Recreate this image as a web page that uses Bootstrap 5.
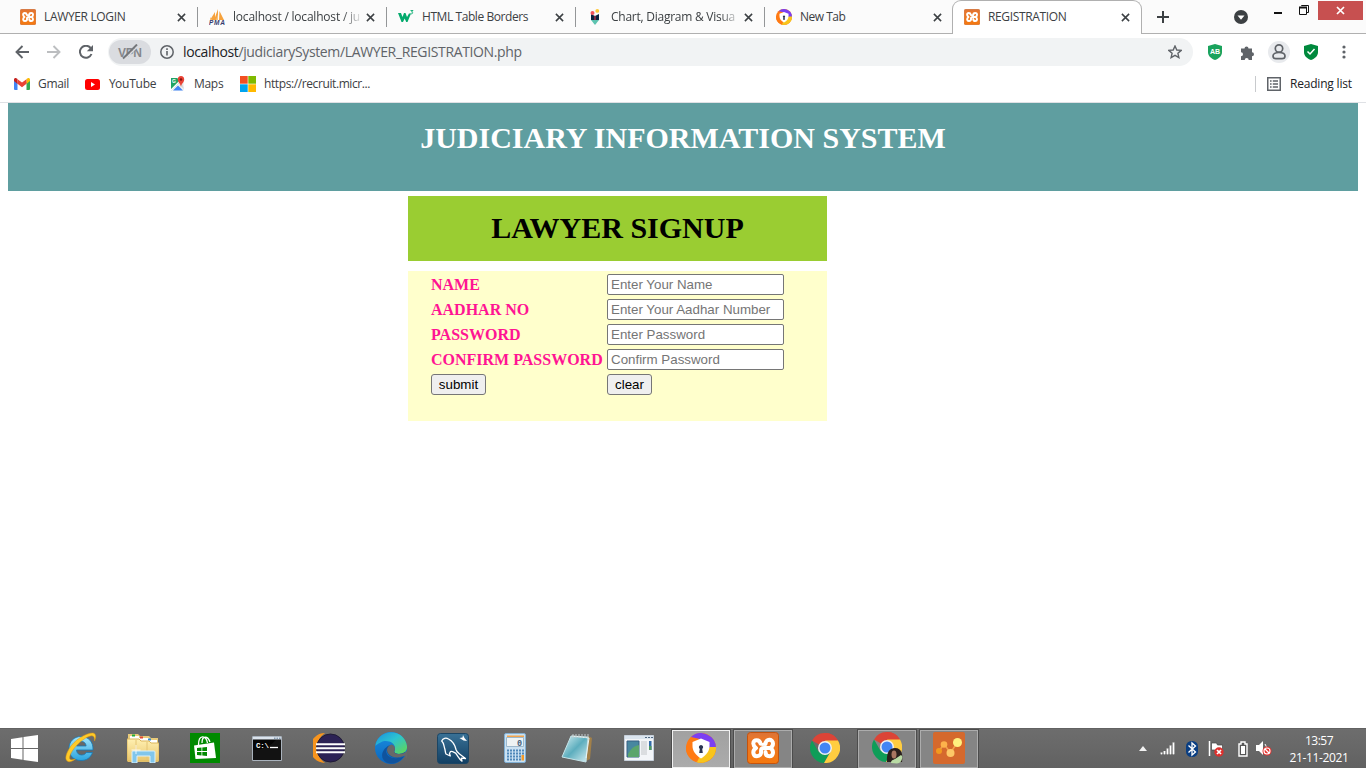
<!DOCTYPE html>
<html lang="en">
<head>
<meta charset="utf-8">
<meta name="viewport" content="width=device-width, initial-scale=1">
<title>REGISTRATION</title>
<link rel="stylesheet" href="https://cdn.jsdelivr.net/npm/bootstrap@5.3.0/dist/css/bootstrap.min.css">
<style>
body{height:768px;overflow:hidden;background:#fff;font-family:"Open Sans","Noto Sans",sans-serif;font-size:12px;line-height:16px;color:#3c4043}
svg{display:block;flex:none}
/* tab strip */
.strip{height:34px;background:#fbfbfb;padding-left:8px;box-shadow:inset 0 -1px #b0b0b0}
.btab{width:189px;height:33px;padding:0 9px 0 12px}
.btab .favi{margin-right:8px}
.ttl{width:130px;white-space:nowrap}
.fade-end{-webkit-mask-image:linear-gradient(90deg,#000 84%,transparent 100%);mask-image:linear-gradient(90deg,#000 84%,transparent 100%)}
.vline{width:1px;height:20px;background:#949698;margin-right:-1px}
.tab-on{height:34px;background:#fff;border:1px solid #b0b0b0;border-bottom:0;border-radius:9px 9px 0 0;margin-left:-1px;width:190px;padding-left:11px}
.tab-on .favi,.tab-on .ttl{margin-bottom:1px}
.winctl{height:19px;margin-bottom:14px}
.btn-x{width:45px;height:19px;background:#c75050}
/* toolbar */
.tools{height:36px}
.omni{width:1085px;height:28px;border-radius:14px;background:#f1f3f4;margin-left:15px}
.vpn{width:42px;height:24px;border-radius:12px;background:#dadce0}
.url{font-size:14px;line-height:20px;color:#5f6368;letter-spacing:-.36px;white-space:nowrap}
.url b{font-weight:400;color:#202124}
.marks{height:33px;border-bottom:1px solid #dfe1e5}
.marks span{white-space:nowrap}
/* page */
.banner{height:88px;margin:0 8px;padding-top:18px;background:#5f9ea0;color:#fff}
.big{font:bold 30px/34px "Liberation Serif",serif;margin:0}
.formcol{width:419px;margin:5px 0 0 408px}
.signhead{height:65px;background:#9acd32;color:#000;padding-top:15px}
.signform{height:150px;margin-top:10px;background:#ffc;padding:3px 0 0 23px}
.signform label{width:176px;font:bold 16px/21px "Liberation Serif",serif;color:#ff1493;white-space:nowrap}
.signform input{width:177px;height:21px;border:1px solid #767676;border-radius:2px;padding:0 3px;font:13.333px/17px "Liberation Sans",sans-serif;background:#fff}
.signform input::placeholder{color:#757575;opacity:1}
.signform button{height:21px;border:1px solid #767676;border-radius:3px;background:#efefef;color:#000;font:13.333px/17px "Liberation Sans",sans-serif;padding:0}
/* taskbar */
.taskbar{height:40px;background:linear-gradient(#6d6d6d,#686868 45%,#616161);border-top:1px solid #626262}
.app{width:62px;height:39px}
.app>svg{margin:-1px 1px 0 0}
.openbox{width:58px;height:38px;display:flex;align-items:center;justify-content:center;border:1px solid #acacac;background:#858585;box-shadow:0 0 0 1px #4c4c4c}
.openbox.now{border-color:#f0f0f0;background:linear-gradient(#a1a1a1,#ababab)}
.openbox svg{margin-top:-1px}
.clock{color:#fff;line-height:17px;width:70px;text-align:center;font-size:12px}
</style>
</head>
<body class="d-flex flex-column">
<svg width="0" height="0" class="position-absolute" aria-hidden="true">
 <defs>
  <linearGradient id="xg" x2="0" y2="1"><stop stop-color="#d8733b"/><stop offset=".15" stop-color="#e8762c"/><stop offset="1" stop-color="#f5790f"/></linearGradient>
  <linearGradient id="eg" x1="0" y1="0" x2="1" y2="1"><stop stop-color="#1b90dc"/><stop offset=".45" stop-color="#2cc3d2"/><stop offset="1" stop-color="#65d94a"/></linearGradient>
  <linearGradient id="eb" x2="0" y2="1"><stop stop-color="#1a8fe0"/><stop offset="1" stop-color="#0b65bd"/></linearGradient>
  <linearGradient id="ie" x2="0" y2="1"><stop stop-color="#a4e6fc"/><stop offset="1" stop-color="#2aa4df"/></linearGradient>
  <linearGradient id="fold" x2="0" y2="1"><stop stop-color="#fff0b2"/><stop offset="1" stop-color="#e9c66c"/></linearGradient>
  <linearGradient id="note" x2="1" y2="1"><stop stop-color="#d9f1f4"/><stop offset=".5" stop-color="#5daebe"/><stop offset="1" stop-color="#d5eef2"/></linearGradient>
  <linearGradient id="sea" x2="0" y2="1"><stop stop-color="#397196"/><stop offset="1" stop-color="#123f63"/></linearGradient>
 </defs>
 <symbol id="xampp" viewBox="0 0 32 32"><rect x=".5" y=".5" width="31" height="31" rx="3" fill="url(#xg)" stroke="#c5530c"/><path d="M13.500 11.500C12.500 7 6.300 7.300 6.300 11.500c0 2 1.200 3.300 2.700 4.500-4 2.500-3.300 8.200.8 8.200 3.200 0 4.700-2 4.200-5.200 0-2 1-3 3-3h6M18.500 12c0-5.500 7.500-5.500 7.500-.500 0 2-1 3.500-2.700 4.500 4 2.500 3.300 8.200-.8 8.200-2.700 0-4-1.700-4-4.200" fill="none" stroke="#fff" stroke-width="4" stroke-linecap="round" stroke-linejoin="round"/><path d="M13.500 11.500q1 1.500 5 .5" fill="none" stroke="#fff" stroke-width="3"/></symbol>
 <symbol id="chrome" viewBox="0 0 30 30"><path d="M15 15 2 7.500A15 15 0 0 1 28 7.500z" fill="#db4437"/><path d="M15 0A15 15 0 0 1 28 7.500H15z" fill="#db4437"/><path d="M2 7.500A15 15 0 0 0 14 30l6.500-11.500L15 15 8.500 18.700z" fill="#0f9d58"/><path d="M28 7.500A15 15 0 0 1 14 30l7.500-13L15 7.500z" fill="#ffcd40"/><circle cx="15" cy="15" r="7" fill="#f1f1f1"/><circle cx="15" cy="15" r="5.500" fill="#4285f4"/></symbol>
 <symbol id="avast" viewBox="0 0 30 30"><circle cx="15" cy="15" r="15" fill="#ff7a14"/><path d="M5 4A15 15 0 0 1 30 15l-5 3L14 6z" fill="#7b3ff2"/><path d="M30 14A15 15 0 0 1 10 29l3-7 11-8z" fill="#f8c51c"/><path d="M0 13a15 15 0 0 0 11 16l3-6-6-14z" fill="#ff7a14"/><path d="M15 5.500 23.500 9v4c0 5-3 9-8.500 12.500C9.500 22 6.500 18 6.500 13V9z" fill="#fff"/><path d="M15 12a2.200 2.200 0 0 1 1.200 4l.6 4h-3.600l.6-4A2.200 2.200 0 0 1 15 12z" fill="#2b3552"/></symbol>
 <symbol id="cross" viewBox="0 0 10 10"><path d="m1 1 8 8M9 1 1 9" stroke="#3c4043" stroke-width="1.700" fill="none"/></symbol>
</svg>

<!-- tabs -->
<header class="strip d-flex align-items-center flex-shrink-0">
 <div class="btab d-flex align-items-center"><svg class="favi" width="16" height="16"><use href="#xampp"/></svg><span class="ttl" style="letter-spacing:-.35px">LAWYER LOGIN</span><svg class="ms-auto" style="margin-right:2px" width="9" height="9"><use href="#cross"/></svg></div>
 <i class="vline"></i>
 <div class="btab d-flex align-items-center"><svg class="favi" width="16" height="16" viewBox="0 0 16 16"><path d="M1 11 6 3v8zM5 11 9 0v11zM10 11l.5-9L15 11z" fill="#f6a23c"/><path d="M1 11V8l2 3zM7 11l2-6v6z" fill="#f8c27a"/><text x="0" y="15.500" font-family="Liberation Sans" font-weight="700" font-style="italic" font-size="6.500" textLength="16" fill="#353c6e">PMA</text></svg><span class="ttl fade-end" style="letter-spacing:-.2px">localhost / localhost / ju</span><svg class="ms-auto" style="margin-right:2px" width="9" height="9"><use href="#cross"/></svg></div>
 <i class="vline"></i>
 <div class="btab d-flex align-items-center"><svg class="favi" width="16" height="16" viewBox="0 0 16 16"><path d="M0 4h3l1.500 4L6 4h1.500L9 8l2-3.500h2L9.500 13H8.200L6.700 9.500 5 13H3.500z" fill="#04aa6d"/><path d="M12.500 1.500h2.500l-1.500 1.500c2 0 1.500 2.200-.800 1.800" fill="none" stroke="#04aa6d" stroke-width=".9"/></svg><span class="ttl" style="letter-spacing:-.43px">HTML Table Borders</span><svg class="ms-auto" style="margin-right:2px" width="9" height="9"><use href="#cross"/></svg></div>
 <i class="vline"></i>
 <div class="btab d-flex align-items-center"><svg class="favi" width="16" height="16" viewBox="0 0 16 16"><path d="m4 5 4 2 4-2v6H4z" fill="#0b2340"/><path d="M4 11h8l-4 5z" fill="#5dc3b0"/><path d="M7 7h2v4H7z" fill="#7b2d45"/><circle cx="5.500" cy="4" r="2" fill="#f2545b"/><circle cx="10.300" cy="1.900" r="1.900" fill="#ffc83a"/></svg><span class="ttl fade-end" style="letter-spacing:-.25px">Chart, Diagram &amp; Visua</span><svg class="ms-auto" style="margin-right:2px" width="9" height="9"><use href="#cross"/></svg></div>
 <i class="vline"></i>
 <div class="btab d-flex align-items-center"><svg class="favi" width="16" height="16"><use href="#avast"/></svg><span class="ttl" style="letter-spacing:-.5px">New Tab</span><svg class="ms-auto" style="margin-right:2px" width="9" height="9"><use href="#cross"/></svg></div>
 <div class="btab tab-on d-flex align-items-center"><svg class="favi" width="16" height="16"><use href="#xampp"/></svg><span class="ttl" style="letter-spacing:-.35px">REGISTRATION</span><svg class="ms-auto" style="margin-right:2px" width="9" height="9"><use href="#cross"/></svg></div>
 <svg style="margin-left:15px" width="12" height="12"><path d="M6 0v12M0 6h12" stroke="#3c4043" stroke-width="2"/></svg>
 <svg style="margin-left:65px" width="14" height="14"><circle cx="7" cy="7" r="7" fill="#3c4043"/><path d="M3.500 5.500h7L7 9.800z" fill="#fff"/></svg>
 <div class="winctl d-flex align-items-center ms-auto">
  <svg width="44" height="19" viewBox="0 0 44 19"><path d="M0 12h8" stroke="#111" stroke-width="2"/><path d="M25.500 6.500h7v7h-7z" fill="none" stroke="#111"/><path d="M25 6.500h8" stroke="#111" stroke-width="2"/><path d="M27.500 5V4.500h7V11.500H33" fill="none" stroke="#111"/></svg>
  <div class="btn-x d-flex align-items-center justify-content-center"><svg width="9" height="9" viewBox="0 0 9 9"><path d="m1 1 7 7M8 1 1 8" stroke="#fff" stroke-width="1.700"/></svg></div><i style="width:3px"></i>
 </div>
</header>

<!-- toolbar -->
<nav class="tools d-flex align-items-center flex-shrink-0">
 <svg style="margin-left:15px" width="14" height="14" viewBox="0 0 14 14"><path d="M14 7H1.500M7.500 1 1.500 7l6 6" fill="none" stroke="#5f6368" stroke-width="1.900"/></svg>
 <svg style="margin-left:18px" width="14" height="14" viewBox="0 0 14 14"><path d="M0 7h12.500M6.500 1l6 6-6 6" fill="none" stroke="#bcbec0" stroke-width="1.900"/></svg>
 <svg style="margin-left:18px" width="14" height="14" viewBox="0 0 14 14"><path d="M12.500 9a6 6 0 1 1-.900-6" fill="none" stroke="#5f6368" stroke-width="2"/><path d="M14 0v6.200H7.800z" fill="#5f6368"/></svg>
 <div class="omni d-flex align-items-center">
  <div class="vpn d-flex align-items-center justify-content-center" style="margin-left:1px"><svg width="26" height="16" viewBox="0 0 26 16"><text x="1" y="12.500" font-family="Liberation Sans" font-weight="700" font-size="12" textLength="24" fill="#85878b">VPN</text><path d="M6.500 16.500 21.500 1.500" stroke="#dadce0" stroke-width="1.500"/><path d="M6 14.500 20 .5" stroke="#75777b" stroke-width="1.900"/></svg></div>
  <svg style="margin:0 9px" width="14" height="14" viewBox="0 0 14 14"><circle cx="7" cy="7" r="6.200" fill="none" stroke="#5f6368" stroke-width="1.500"/><path d="M7 6v4.500M7 3.300v1.700" stroke="#5f6368" stroke-width="1.600"/></svg>
  <span class="url"><b>localhost</b>/judiciarySystem/LAWYER_REGISTRATION.php</span>
  <svg class="ms-auto" style="margin-right:11px" width="14" height="14" viewBox="0 0 14 14"><path d="m7 1 1.800 4 4.400.400-3.300 2.900 1 4.300L7 10.300l-3.900 2.300 1-4.300L.8 5.400l4.400-.4z" fill="none" stroke="#5f6368" stroke-width="1.400"/></svg>
 </div>
 <svg style="margin-left:15px" width="14" height="16" viewBox="0 0 14 16"><path d="M7 0 14 2v6c0 4-3 6.500-7 8-4-1.500-7-4-7-8V2z" fill="#1aa35c"/><text x="2" y="9.800" font-family="Liberation Sans" font-weight="700" font-size="7" textLength="10" fill="#fff">AB</text></svg>
 <svg style="margin-left:18px" width="15" height="15" viewBox="0 0 15 15"><path d="M1 3.500h3.500a2 2 0 0 1 4 0H12v3.700a2 2 0 0 1 0 4V15H8.700a2 2 0 0 0-4 0H1v-3.700a2 2 0 0 0 0-4z" fill="#5f6368"/></svg>
 <svg style="margin-left:13px" width="22" height="22" viewBox="0 0 22 22"><circle cx="11" cy="11" r="11" fill="#e8eaed"/><circle cx="11" cy="7.500" r="3.700" fill="none" stroke="#5f6368" stroke-width="1.700"/><path d="M11 11.500c3.500 0 6 1.500 6 3.500s-1 2.700-3 2.700H8c-2 0-3-.7-3-2.700s2.500-3.500 6-3.500z" fill="none" stroke="#5f6368" stroke-width="1.700"/></svg>
 <svg style="margin-left:14px" width="14" height="16" viewBox="0 0 14 16"><path d="M7 0 14 2v6c0 4-3 6.500-7 8-4-1.500-7-4-7-8V2z" fill="#00893d"/><path d="m3.500 7.500 2.500 2.500 4.500-5" fill="none" stroke="#fff" stroke-width="1.500"/></svg>
 <svg style="margin-left:24px" width="4" height="14" viewBox="0 0 4 14"><g fill="#5f6368"><circle cx="2" cy="2" r="1.600"/><circle cx="2" cy="7" r="1.600"/><circle cx="2" cy="12" r="1.600"/></g></svg>
</nav>

<!-- bookmarks -->
<nav class="marks d-flex align-items-start flex-shrink-0">
 <div class="d-flex align-items-center w-100" style="height:28px">
 <svg style="margin-left:14px" width="16" height="12" viewBox="0 0 16 12"><path d="M0 1.500V11q0 1 1 1h2.500V4z" fill="#4285f4"/><path d="M16 1.500V11q0 1-1 1h-2.500V4z" fill="#34a853"/><path d="M0 3V1.500C0 0 1.700-.500 2.800.500L3.500 1v5z" fill="#c5221f"/><path d="M16 3V1.500C16 0 14.300-.500 13.200.500L12.500 1v5z" fill="#fbbc04"/><path d="m3.500 1.200 4.500 3.400 4.500-3.400v4.600L8 9.200 3.500 5.800z" fill="#ea4335"/></svg>
 <span style="margin-left:8px;width:47px;letter-spacing:-.3px">Gmail</span>
 <svg width="15" height="11" viewBox="0 0 15 11"><rect width="15" height="11" rx="2.500" fill="#f00"/><path d="m6 3 4 2.500L6 8z" fill="#fff"/></svg>
 <span style="margin-left:9px;width:61px;letter-spacing:-.65px"><span style="letter-spacing:-.6px">Y</span><span style="letter-spacing:-.25px">ouTube</span></span>
 <svg width="16" height="16" viewBox="0 0 16 16"><path d="M1 2h13v12.500H1z" fill="#f2f2f2"/><path d="M1 2h6l4 3L1 14.500z" fill="#1fa463"/><path d="m3 14.500 5-5 5 5z" fill="#4285f4"/><path d="m9 9 3-2 2 6z" fill="#d8d8d8"/><path d="m1 14 9-9" stroke="#fff" stroke-width="1.200"/><text x="2" y="6.500" font-size="5" font-family="Liberation Sans" font-weight="700" fill="#fff">G</text><path d="M11 11C11 8 7.800 6.500 7.800 3.500a3.200 3.500 0 0 1 6.400 0C14.200 6.500 11 8 11 11z" fill="#ea4335"/><circle cx="11" cy="3.500" r="1.200" fill="#811411"/></svg>
 <span style="margin-left:8px;width:46px;letter-spacing:-.3px">Maps</span>
 <svg width="16" height="16"><path d="M0 0h7.700v7.700H0z" fill="#f25022"/><path d="M8.300 0H16v7.700H8.300z" fill="#7fba00"/><path d="M0 8.300h7.700V16H0z" fill="#00a4ef"/><path d="M8.300 8.300H16V16H8.300z" fill="#ffb900"/></svg>
 <span style="margin-left:8px;letter-spacing:-.4px">https://recruit.micr...</span>
 <i class="ms-auto" style="width:1px;height:16px;background:#c8cacd"></i>
 <svg style="margin-left:11px" width="14" height="14" viewBox="0 0 14 14"><rect x=".75" y=".75" width="12.500" height="12.500" fill="none" stroke="#5f6368" stroke-width="1.500"/><path d="M3 4h1.600M3 7h1.600M3 10h1.600M5.800 4H11M5.800 7H11M5.800 10H11" stroke="#5f6368" stroke-width="1.400"/></svg>
 <span style="margin:0 14px 0 9px;width:62px;color:#202124;letter-spacing:-.2px">Reading list</span>
 </div>
</nav>

<!-- page content -->
<main class="flex-grow-1">
 <div class="banner text-center"><h1 class="big">JUDICIARY INFORMATION SYSTEM</h1></div>
 <div class="formcol">
  <div class="signhead text-center"><h1 class="big">LAWYER SIGNUP</h1></div>
  <form class="signform d-flex flex-column gap-1">
   <div class="d-flex"><label for="n">NAME</label><input id="n" placeholder="Enter Your Name"></div>
   <div class="d-flex"><label for="a">AADHAR NO</label><input id="a" placeholder="Enter Your Aadhar Number"></div>
   <div class="d-flex"><label for="p">PASSWORD</label><input id="p" type="password" placeholder="Enter Password"></div>
   <div class="d-flex"><label for="c">CONFIRM PASSWORD</label><input id="c" type="password" placeholder="Confirm Password"></div>
   <div class="d-flex"><button type="button" style="width:55px;margin-right:121px">submit</button><button type="reset" style="width:45px">clear</button></div>
  </form>
 </div>
</main>

<!-- taskbar -->
<footer class="taskbar d-flex align-items-center flex-shrink-0">
 <div class="d-flex justify-content-center" style="width:50px"><svg style="margin:-1px 0 0 -1px" width="27" height="27" viewBox="0 0 27 27"><path d="M0 4 11.500 2.200V13H0zM12.500 2 27 0v13H12.500zM0 14h11.500v10.700L0 23zM12.500 14H27v13l-14.500-2.100z" fill="#fff"/></svg></div>
 <div class="app d-flex align-items-center justify-content-center"><svg width="32" height="32" viewBox="0 0 32 32"><path d="M16 4.500c7 0 12.500 5 12 13.500H11.500c.3 3.500 2.500 5 5.200 5 2.300 0 3.800-1 4.500-2.500h6.300C25.500 26 21.500 28.500 16 28.500 8.500 28.500 4 23.500 4 16.500S9 4.500 16 4.500zM11.500 14h9.600c-.3-3-2-4.500-4.700-4.500-2.800 0-4.500 1.700-4.900 4.500z" fill="url(#ie)" stroke="#1779b5" stroke-width=".8"/><path d="M29.500 9c2-4 1.500-8-2-8C21 1 9 8 4 17c-3.500 6-4.500 11-1 12.500 2 .8 4.500-.3 7.500-2.500C6 28.500 3.500 28 5 23.500 8 15 20 4.500 26.500 3.800c2.600-.1 3.200 2.400 3 5.200z" fill="#ffca28" stroke="#dc9410" stroke-width=".5"/></svg></div>
 <div class="app d-flex align-items-center justify-content-center"><svg width="32" height="30" viewBox="0 0 32 30"><path d="M1 1h10l2 2h9l2 2h7v24H1z" fill="#e8cb7b"/><path d="M3 3h9v5H3zM12 5h10v5H12zM20 7h10v4H20z" fill="#fff"/><path d="M5 1.500h3v2H5z" fill="#20ad38"/><path d="M13 3.500h3v2h-3z" fill="#df4534"/><path d="M21 5.500h3v2h-3z" fill="#338bd1"/><path d="M0 6h12l2 2h8l2 2h8v18H0z" fill="url(#fold)" stroke="#dcb65a"/><path d="M9 7v20M20 9v18" stroke="#e4c474"/><path d="M5 30V19q0-1 1-1h21q1 0 1 1v11h-5v-7H10v7z" fill="#81c6eb" stroke="#d8f0fb"/><path d="M9 12v9M4.500 17h9" stroke="#fff" opacity=".8"/></svg></div>
 <div class="app d-flex align-items-center justify-content-center"><svg style="margin-right:0" width="30" height="30" viewBox="0 0 30 30"><path fill="#008a00" d="M0 0h30v30H0z"/><path d="M4 12.500 24 9.500 26 25 5.500 26z" fill="#fff"/><path d="M8.500 12c0-11 7.500-10 9-2M12 10c0-8 6-7 8-1" fill="none" stroke="#fff" stroke-width="1.300"/><path d="m7 15 4.500-.5v3.500H7zM12.300 14.400 17 14v4h-4.700zM7 19h4.500v3.500L7 22zM12.300 19H17v4l-4.700-.500z" fill="#008a00"/></svg></div>
 <div class="app d-flex align-items-center justify-content-center"><svg width="30" height="25" viewBox="0 0 30 25"><path fill="#050505" stroke="#aab3bd" d="M.5.5h29v24H.5z"/><path fill="#dce4ed" d="M1 1h28v2.500H1z"/><path d="M22 2.200h1.500m1 0H26m1 0h1.500" stroke="#5c7690"/><path d="M1 14q14 0 23-10h5v20H1z" fill="#333" opacity=".3"/><text x="4" y="11.500" fill="#fff" font-family="Liberation Mono" font-weight="700" font-size="7.500" textLength="13">C:\</text><path d="M18 11.500h8" stroke="#fff" stroke-width="1.300"/></svg></div>
 <div class="app d-flex align-items-center justify-content-center"><svg width="32" height="30" viewBox="0 0 32 30"><path d="M12 0A15 15 0 0 0 12 30 18 18 0 0 1 12 0z" fill="#f7941e"/><circle cx="17.500" cy="15" r="14" fill="#2c2255" stroke="#201b35"/><path d="M3 11.300h29M3 15.300h29M3 19.300h29" stroke="#fff" stroke-width="2"/></svg></div>
 <div class="app d-flex align-items-center justify-content-center"><svg width="32" height="32" viewBox="0 0 32 32"><circle cx="16" cy="16" r="16" fill="url(#eb)"/><path d="M.4 14C2-3 29-5 32 14c.5 5-3 8-7.500 8-4 0-6-1.500-5-3.500 3-7-7-12-14-8-3 1.500-4.500 2.500-5.100 3.500z" fill="url(#eg)"/><path d="M11.500 17c-2 8 8 12 18 7-5 7-12 9-18 6.500C4 26 7 17 14 13.500c4 0 6.500 2 5.500 5-1 2 1 3.500 4 3.500q4 0 6.500-2-.5 2-1.500 4c-8 4-17 1-17-7z" fill="#10539d"/><path d="M19.500 18.500c1-2 .5-5-3-6-3 1-4.500 3-4.500 5.500 0 3 2 5 5 6.500 4 1.500 8 1.300 12-.5 1.200-.6 2.200.2 1.500 1.200L32 27V19q-3 3-7.500 3c-4 0-6-1.500-5-3.500z" fill="#686868"/></svg></div>
 <div class="app d-flex align-items-center justify-content-center"><svg width="32" height="31" viewBox="0 0 32 31"><rect x=".5" y=".5" width="31" height="30" rx="3" fill="url(#sea)" stroke="#1b4564"/><path d="M4.700 8C6 5 9 4.500 11.500 6c5 2.500 6.500 6 7.500 10.500.5 2 2 3.500 3.500 4.500l6 4.500-4.200-.300.700 3C22 26 21 23 18.500 20c-2-1-3.500-2-5-1.500L12.500 20.500l.8 2.500L9 21C8 19 8.500 18 7.700 15.500 6.700 12.500 7 10 4.700 8z" fill="none" stroke="#fff" stroke-width="1.300" stroke-linejoin="round"/><path d="m22.500 5 3-.5L26 2l1.500 3L30 8l-3.500-.5z" fill="#fff"/></svg></div>
 <div class="app d-flex align-items-center justify-content-center"><svg width="22" height="30" viewBox="0 0 22 30"><rect x=".5" y=".5" width="21" height="29" rx="1.500" fill="#cae1f2" stroke="#80afd4"/><path d="M3 2.500h17v2H3z" fill="#f3a44c"/><path d="M2.500 4.500h17v9h-17z" fill="#eef3f4" stroke="#9db9cd"/><text x="13" y="12.500" font-family="Liberation Mono" font-weight="700" font-size="8.500" fill="#45617b">0</text><path d="M3 17.500h17M3 20.500h17M3 23.500h14M3 26.500h14" stroke="#4f88b9" stroke-width="2" stroke-dasharray="2 1"/><path d="M17.500 22h2.500v5.500h-2.500z" fill="#f59b29"/></svg></div>
 <div class="app d-flex align-items-center justify-content-center"><svg width="32" height="30" viewBox="0 0 32 30"><path d="m27 3 4 2-2 21-4 2z" fill="#a28049"/><path d="m10 3 17 1-2 25L1 24z" fill="url(#note)" stroke="#c5e3e8"/><path d="m11 3 17 2-3 20" fill="none" stroke="#e8f5f5"/><path d="M12 1v4m3-4v4m3-4v4m3-4v4m3-4v4m3-4v4" stroke="#bfc8ca"/></svg></div>
 <div class="app d-flex align-items-center justify-content-center"><svg width="30" height="26" viewBox="0 0 30 26"><path d="M.5.5h29v25H.5z" fill="#f3f5f8" stroke="#c7d0db"/><path d="M1 1h28v3H1z" fill="#dbe5ef"/><path d="M21 2.500h2m1 0h2m1 0h2" stroke="#506983"/><path d="M3 6h12v16H3z" fill="#4887a0" stroke="#375f83"/><path d="M4 19q4-8 11-9v12H4z" fill="#5ca56c"/><path d="M17 7h6m-6 2h6m-6 2h6m-6 2h6m-6 2h6m-6 2h6m-6 2h6" stroke="#c2c5c8"/><path d="M25 6h2.500v9H25z" fill="#326ba9"/><path d="M25 11h2.500v4H25z" fill="#4e9a62"/></svg></div>
 <div class="app d-flex align-items-center justify-content-center"><div class="openbox now"><svg width="30" height="30"><use href="#avast"/></svg></div></div>
 <div class="app d-flex align-items-center justify-content-center"><div class="openbox"><svg width="32" height="32"><use href="#xampp"/></svg></div></div>
 <div class="app d-flex align-items-center justify-content-center"><svg style="margin-right:0" width="30" height="30"><use href="#chrome"/></svg></div>
 <div class="app d-flex align-items-center justify-content-center"><div class="openbox"><svg width="32" height="32" viewBox="0 0 32 32"><use href="#chrome" width="30" height="30" x="1"/><path d="M16 30q-1-14 8-14c7 0 8 7 7 14z" fill="#2b201d"/><ellipse cx="23" cy="22.500" rx="2.500" ry="4" fill="#a97661"/><path d="M20 31c0-3 2-3 4-4l6-4q2 1 1 4-1 4-5 4.500z" fill="#b9dba4"/></svg></div></div>
 <div class="app d-flex align-items-center justify-content-center"><div class="openbox"><svg width="32" height="32" viewBox="0 0 32 32"><rect width="32" height="32" rx="2" fill="#d5692d"/><path d="m6 19 5-7 6.500 9 7-11" fill="none" stroke="#f3a24b" stroke-width="1.500"/><circle cx="6" cy="19" r="3" fill="#f19a20"/><circle cx="11" cy="12.500" r="3.300" fill="#fdb24b"/><circle cx="17.500" cy="21" r="4" fill="#fdc867"/><circle cx="24.500" cy="10.500" r="4.500" fill="#fff07f"/></svg></div></div>
 <div class="d-flex align-items-center ms-auto">
  <svg width="8" height="5"><path d="M0 5 4 0l4 5z" fill="#f2f2f2"/></svg>
  <svg style="margin-left:13px" width="16" height="13" viewBox="0 0 16 13"><path d="M1.500 13v-2M4.500 13v-3.500M7.500 13V7M10.500 13V4M13.500 13V1" stroke="#444" stroke-width="3"/><path d="M1.500 12.500v-2M4.500 12.500V9M7.500 12.500V6.500M10.500 12.500v-9M13.500 12.500V.5" stroke="#fff" stroke-width="2"/></svg>
  <svg style="margin-left:10px" width="12" height="16" viewBox="0 0 12 16"><rect width="12" height="16" rx="5.500" fill="#0a3e82"/><path d="m2.500 4.500 7 6.500L6 14V2l3.500 3-7 6.500" fill="none" stroke="#fff" stroke-width="1.300"/></svg>
  <svg style="margin-left:10px" width="16" height="16" viewBox="0 0 16 16"><path d="M1.500 0v15" stroke="#fff" stroke-width="1.500"/><path d="M3.500 2h5l1 2h5v7h-5L8 9H3.500z" fill="#fff" stroke="#444" stroke-width=".7"/><circle cx="11" cy="11" r="4.700" fill="#dd302d"/><path d="m9 9 4 4m0-4-4 4" stroke="#fff" stroke-width="1.700"/></svg>
  <svg style="margin-left:14px" width="10" height="16" viewBox="0 0 10 16"><path d="M3 1h4v2h2v12H1V3h2z" fill="#555" stroke="#fff" stroke-width="1.400"/><path d="M3 5h4v8H3z" fill="#fff"/></svg>
  <svg style="margin-left:8px" width="16" height="15" viewBox="0 0 16 15"><path d="M0 4h3l4-4v14l-4-4H0z" fill="#fff"/><path d="M9 3q2 2 1 6" fill="none" stroke="#fff"/><circle cx="11" cy="10" r="4.500" fill="#e8302c"/><circle cx="11" cy="10" r="3" fill="#e8302c" stroke="#fff" stroke-width="1.100"/><path d="m9 8 4 4" stroke="#fff" stroke-width="1.300"/></svg>
  <div class="clock" style="margin:0 12px"><div style="letter-spacing:-.5px">13:57</div><div style="letter-spacing:-.35px">21-11-2021</div></div>
 </div>
</footer>
<script src="https://cdn.jsdelivr.net/npm/bootstrap@5.3.0/dist/js/bootstrap.bundle.min.js"></script>
</body>
</html>
